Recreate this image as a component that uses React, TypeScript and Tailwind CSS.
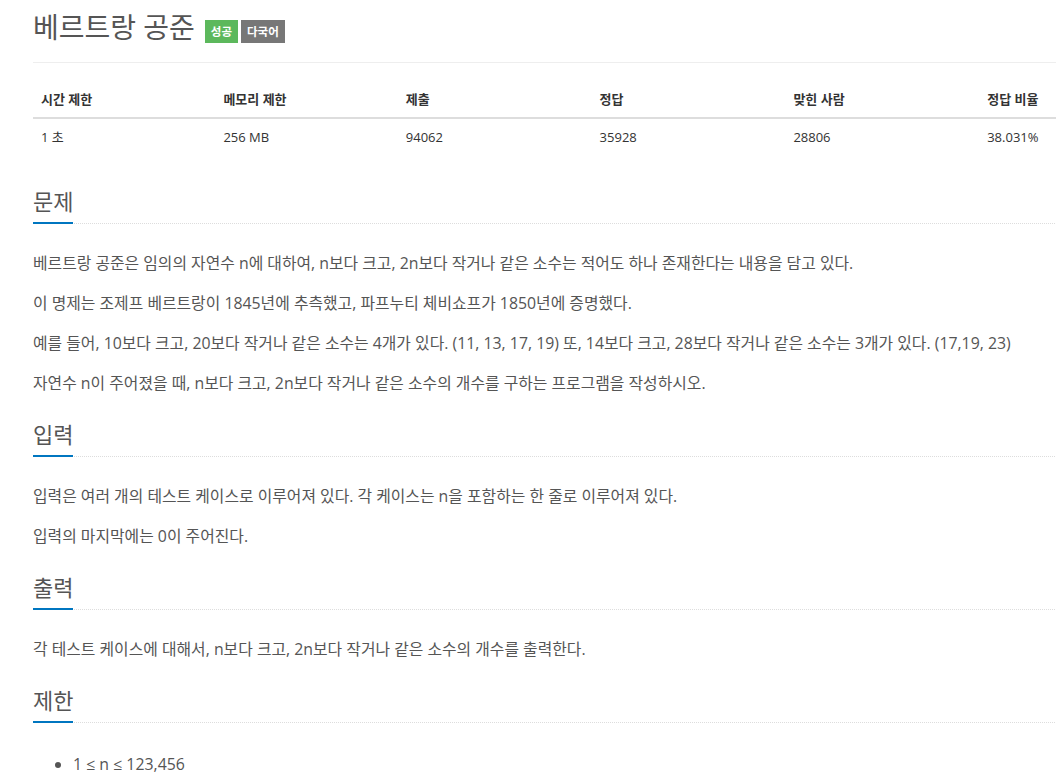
import React from 'react'

const FONT = '"Open Sans", "Noto Sans CJK KR", sans-serif'

const limits = [
  { label: '시간 제한', value: '1 초', w: 'w-[16%]' },
  { label: '메모리 제한', value: '256 MB', w: 'w-[16%]' },
  { label: '제출', value: '94062', w: 'w-[17%]' },
  { label: '정답', value: '35928', w: 'w-[17%]' },
  { label: '맞힌 사람', value: '28806', w: 'w-[17%]' },
  { label: '정답 비율', value: '38.031%', w: 'w-[17%]' }
]

function Headline({ title }: { title: string }) {
  return (
    <div className="mt-[20px] border-b border-dotted border-[#ddd]">
      <h2 className="inline-block -mb-px pb-[5px] border-b-2 border-[#0076c0] text-[22px] leading-[32px] text-[#555]">
        {title}
      </h2>
    </div>
  )
}

function Section({ title, children }: { title: string; children: React.ReactNode }) {
  return (
    <section>
      <Headline title={title} />
      <div className="mt-[24px] text-[15.85px] leading-[30px] text-[#555]">{children}</div>
    </section>
  )
}

export default function App() {
  return (
    <div className="w-[1056px] h-[779px] overflow-hidden bg-white" style={{ fontFamily: FONT }}>
      <div className="w-[1173px] pl-[33px]">
        {/* Title */}
        <div className="pt-[11px] pb-[18px] border-b border-[#eee] flex items-start">
          <h1 className="text-[28px] leading-[33px] text-[#555]">베르트랑 공준</h1>
          <div className="ml-[10px] mt-[9px] flex gap-[3px]">
            <span className="h-[23px] px-[6px] flex items-center bg-[#5cb85c] text-white text-[11.5px] font-bold">
              성공
            </span>
            <span className="h-[23px] px-[6px] flex items-center bg-[#777] text-white text-[11.5px] font-bold">
              다국어
            </span>
          </div>
        </div>

        {/* Limits table */}
        <table className="mt-[18px] mb-[30px] w-[1140px] border-collapse text-[13px] leading-[20px] text-[#333] table-fixed">
          <thead>
            <tr>
              {limits.map((l) => (
                <th key={l.label} className={`${l.w} p-[8px] text-left font-bold border-b-2 border-[#ddd]`}>
                  {l.label}
                </th>
              ))}
            </tr>
          </thead>
          <tbody>
            <tr>
              {limits.map((l) => (
                <td key={l.label} className="p-[8px]">
                  {l.value}
                </td>
              ))}
            </tr>
          </tbody>
        </table>

        <Section title="문제">
          <p className="mb-[10px]">
            베르트랑 공준은 임의의 자연수 n에 대하여, n보다 크고, 2n보다 작거나 같은 소수는 적어도 하나 존재한다는 내용을 담고 있다.
          </p>
          <p className="mb-[10px]">이 명제는 조제프 베르트랑이 1845년에 추측했고, 파프누티 체비쇼프가 1850년에 증명했다.</p>
          <p className="mb-[10px]">
            예를 들어, 10보다 크고, 20보다 작거나 같은 소수는 4개가 있다. (11, 13, 17, 19) 또, 14보다 크고, 28보다 작거나 같은 소수는 3개가 있다. (17,19, 23)
          </p>
          <p className="mb-[10px]">자연수 n이 주어졌을 때, n보다 크고, 2n보다 작거나 같은 소수의 개수를 구하는 프로그램을 작성하시오.</p>
        </Section>

        <Section title="입력">
          <p className="mb-[10px]">입력은 여러 개의 테스트 케이스로 이루어져 있다. 각 케이스는 n을 포함하는 한 줄로 이루어져 있다.</p>
          <p className="mb-[10px]">입력의 마지막에는 0이 주어진다.</p>
        </Section>

        <Section title="출력">
          <p className="mb-[10px]">각 테스트 케이스에 대해서, n보다 크고, 2n보다 작거나 같은 소수의 개수를 출력한다.</p>
        </Section>

        <Section title="제한">
          <ul className="list-disc pl-[40px] pt-[2px] marker:text-[#555]">
            <li>1 ≤ n ≤ 123,456</li>
          </ul>
        </Section>
      </div>
    </div>
  )
}
